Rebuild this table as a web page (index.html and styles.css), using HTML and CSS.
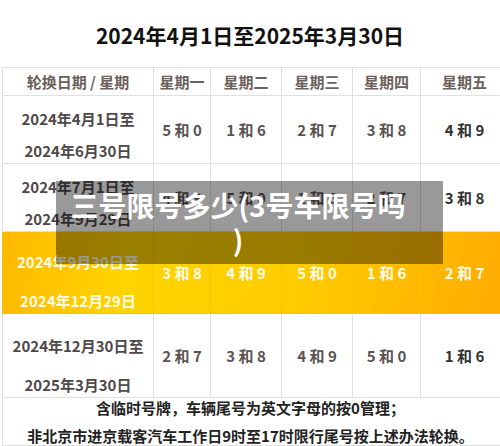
FILE: index.html
```html
<!DOCTYPE html>
<html lang="zh-CN">
<head>
    <meta charset="UTF-8">
    <meta name="viewport" content="width=device-width, initial-scale=1.0">
    <title>三号限号多少</title>
    <link rel="stylesheet" href="styles.css">
</head>
<body>
    <div class="page">
        <h1 class="title">2024年4月1日至2025年3月30日</h1>
        <table class="plan">
            <tr class="head-row">
                <th class="col-date">轮换日期 / 星期</th>
                <th class="col-mon">星期一</th>
                <th class="col-tue">星期二</th>
                <th class="col-wed">星期三</th>
                <th class="col-thu">星期四</th>
                <th class="col-fri">星期五</th>
            </tr>
            <tr class="row-short">
                <td class="date-cell"><div class="line first">2024年4月1日至</div><div class="line">2024年6月30日</div></td>
                <td>5 和 0</td>
                <td>1 和 6</td>
                <td>2 和 7</td>
                <td>3 和 8</td>
                <td class="dark">4 和 9</td>
            </tr>
            <tr class="row-short">
                <td class="date-cell"><div class="line first">2024年7月1日至</div><div class="line">2024年9月29日</div></td>
                <td>4 和 9</td>
                <td>5 和 0</td>
                <td>1 和 6</td>
                <td>2 和 7</td>
                <td class="dark">3 和 8</td>
            </tr>
            <tr class="row-tall current">
                <td class="date-cell"><div class="line first">2024年9月30日至</div><div class="line">2024年12月29日</div></td>
                <td>3 和 8</td>
                <td>4 和 9</td>
                <td>5 和 0</td>
                <td>1 和 6</td>
                <td>2 和 7</td>
            </tr>
            <tr class="row-tall last">
                <td class="date-cell"><div class="line first">2024年12月30日至</div><div class="line">2025年3月30日</div></td>
                <td>2 和 7</td>
                <td>3 和 8</td>
                <td>4 和 9</td>
                <td>5 和 0</td>
                <td class="dark">1 和 6</td>
            </tr>
            <tr class="note-row">
                <td colspan="6" class="note">
                    <div class="note-first">含临时号牌，车辆尾号为英文字母的按0管理；</div>
                    <div class="note-second">非北京市进京载客汽车工作日9时至17时限行尾号按上述办法轮换。</div>
                </td>
            </tr>
        </table>
        <div class="caption">三号限号多少(3号车限号吗)</div>
    </div>
</body>
</html>
```

FILE: styles.css
```css
body {
    margin: 0;
    background-color: #ffffff;
    font-family: "Noto Sans CJK SC", "Noto Sans", sans-serif;
}
.page {
    position: relative;
    width: 500px;
    height: 446px;
    overflow: hidden;
}
.title {
    margin: 0;
    height: 67px;
    line-height: 70px;
    text-align: center;
    font-size: 21px;
    font-weight: 700;
    color: #111;
}
.plan {
    margin-left: 2px;
    width: 500px;
    border-collapse: collapse;
    table-layout: fixed;
    font-size: 15px;
    font-weight: 700;
}
.plan th, .plan td {
    border: 1px solid #e0e0e0;
    padding: 0;
    text-align: center;
    white-space: nowrap;
}
.col-date { width: 150px; }
.col-mon { width: 56px; }
.col-tue { width: 70px; }
.col-wed { width: 70px; }
.col-thu { width: 67px; }
.col-fri { width: 87px; }
.head-row th {
    height: 27px;
    color: #6b605c;
    font-size: 15px;
}
.plan td {
    color: #5b5353;
}
.plan td.dark {
    color: #333;
}
.row-short td { height: 67px; }
.row-tall td { height: 81px; }
.last td { height: 83px; }
.date-cell {
    vertical-align: bottom;
}
.date-cell .line {
    line-height: 24px;
    color: #4f4848;
}
.row-short .first { margin-bottom: 8px; }
.row-tall .first { margin-bottom: 15px; }
.current td {
    border-color: #f5c400;
    background: linear-gradient(100deg, #ffb000 0%, #ffd400 30%, #ffcc00 60%, #ffa800 100%);
    background-attachment: fixed;
}
.current td,
.current .date-cell .line {
    color: #fffbe8;
}
.note {
    vertical-align: top;
    padding-right: 10px !important;
    color: #222 !important;
    font-size: 15px;
}
.note-first {
    line-height: 20px;
}
.note-second {
    margin-top: 9px;
    line-height: 18px;
}
.caption {
    position: absolute;
    left: 56px;
    top: 181px;
    width: 336px;
    height: 76px;
    padding: 7px 37px 0 14px;
    background-color: rgba(0, 0, 0, 0.4);
    color: #ffffff;
    font-size: 28px;
    font-weight: 700;
    line-height: 34px;
    text-align: center;
    line-break: anywhere;
}
```
